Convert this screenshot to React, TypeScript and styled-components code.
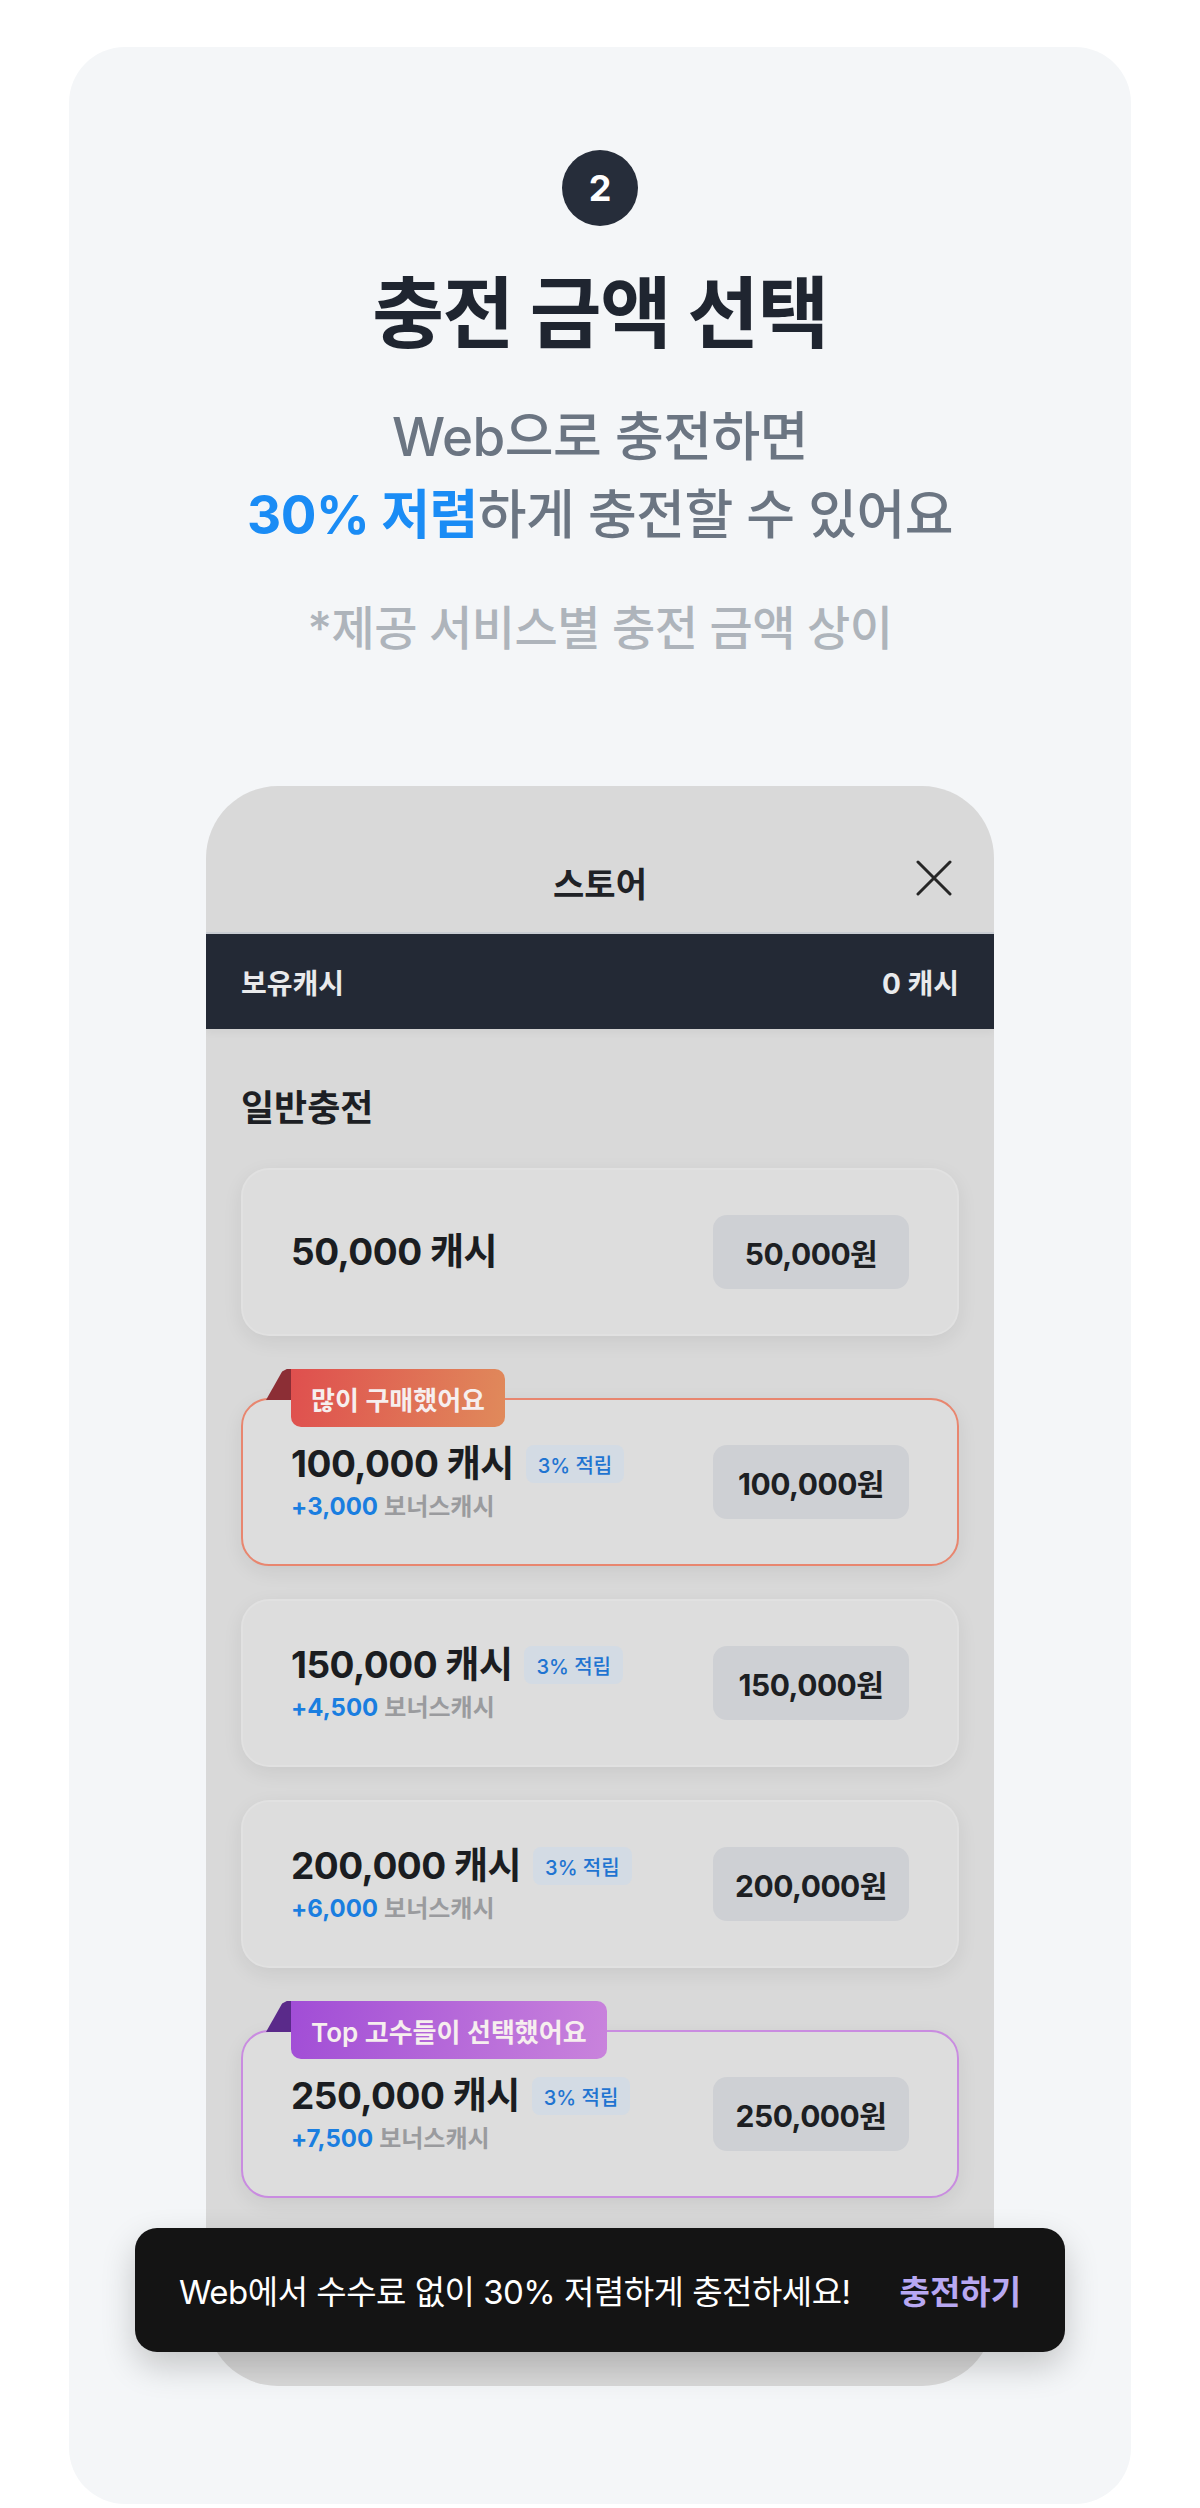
import styled, { createGlobalStyle } from 'styled-components';

type Plan = {
  cash: string,
  price: string,
  bonus?: string,
  badge?: { label: string, tone: 'coral' | 'violet' },
};

const PLANS: Plan[] = [
  { cash: '50,000', price: '50,000원' },
  { cash: '100,000', price: '100,000원', bonus: '+3,000', badge: { label: '많이 구매했어요', tone: 'coral' } },
  { cash: '150,000', price: '150,000원', bonus: '+4,500' },
  { cash: '200,000', price: '200,000원', bonus: '+6,000' },
  { cash: '250,000', price: '250,000원', bonus: '+7,500', badge: { label: 'Top 고수들이 선택했어요', tone: 'violet' } },
];

const TONES = {
  coral: { border: '#e8866f', from: '#df4f4e', to: '#e08a5b', fold: '#8c2e35' },
  violet: { border: '#c98ce0', from: '#a14dd6', to: '#c983dc', fold: '#5a2a8a' },
};

const CloseIcon = () => (
  <svg width="36" height="36" viewBox="0 0 36 36" fill="none">
    <path d="M2 2L34 34M34 2L2 34" stroke="#262626" strokeWidth="3" strokeLinecap="round" />
  </svg>
);

const App = () => (
  <>
    <GlobalStyle />
    <Section>
      <StepBadge>2</StepBadge>
      <Title>충전 금액 선택</Title>
      <Subtitle>
        Web으로 충전하면
        <br />
        <Accent>30% 저렴</Accent>하게 충전할 수 있어요
      </Subtitle>
      <Note>*제공 서비스별 충전 금액 상이</Note>

      <PhoneWrap>
        <Phone>
          <StoreHeader>
            <StoreTitle>스토어</StoreTitle>
            <CloseButton><CloseIcon /></CloseButton>
          </StoreHeader>
          <BalanceBar>
            <span>보유캐시</span>
            <span>0 캐시</span>
          </BalanceBar>
          <StoreBody>
            <GroupTitle>일반충전</GroupTitle>
            <PlanList>
              {PLANS.map(plan => {
                const tone = plan.badge ? TONES[plan.badge.tone] : undefined;
                return (
                  <PlanCard key={plan.cash} $border={tone?.border}>
                    {plan.badge && tone && (
                      <>
                        <RibbonFold $color={tone.fold} />
                        <Ribbon $from={tone.from} $to={tone.to}>{plan.badge.label}</Ribbon>
                      </>
                    )}
                    <PlanInfo>
                      <AmountRow>
                        <Amount>{plan.cash} 캐시</Amount>
                        {plan.bonus && <RateChip>3% 적립</RateChip>}
                      </AmountRow>
                      {plan.bonus && (
                        <Bonus>
                          <BonusValue>{plan.bonus}</BonusValue> 보너스캐시
                        </Bonus>
                      )}
                    </PlanInfo>
                    <PriceButton>{plan.price}</PriceButton>
                  </PlanCard>
                );
              })}
            </PlanList>
          </StoreBody>
        </Phone>
        <Toast>
          <ToastText>Web에서 수수료 없이 30% 저렴하게 충전하세요!</ToastText>
          <ToastAction>충전하기</ToastAction>
        </Toast>
      </PhoneWrap>
    </Section>
  </>
);

export default App;

const GlobalStyle = createGlobalStyle`
  body {
    margin: 0;
    background: #ffffff;
    font-family: Inter, "Noto Sans CJK KR", sans-serif;
  }
`;

const Section = styled.section`
  margin: 47px 69px 0;
  padding: 103px 0 118px;
  background: #f4f6f8;
  border-radius: 56px;
  display: flex;
  flex-direction: column;
  align-items: center;
`;

const StepBadge = styled.div`
  width: 76px;
  height: 76px;
  border-radius: 50%;
  background: #262d3a;
  color: #ffffff;
  font-size: 36px;
  font-weight: 700;
  display: flex;
  align-items: center;
  justify-content: center;
`;

const Title = styled.h1`
  margin: 40px 0 0;
  font-size: 78px;
  line-height: 96px;
  font-weight: 700;
  letter-spacing: -1.5px;
  color: #1f2530;
`;

const Subtitle = styled.p`
  margin: 36px 0 0;
  font-size: 53px;
  line-height: 78px;
  font-weight: 500;
  letter-spacing: -0.5px;
  color: #6b7582;
  text-align: center;
`;

const Accent = styled.span`
  color: #1a8cf5;
  font-weight: 700;
`;

const Note = styled.p`
  margin: 42px 0 0;
  font-size: 47px;
  line-height: 64px;
  font-weight: 500;
  letter-spacing: -0.5px;
  color: #aeb4bb;
`;

const PhoneWrap = styled.div`
  position: relative;
  width: 788px;
  margin-top: 126px;
`;

const Phone = styled.div`
  height: 1600px;
  border-radius: 72px;
  background: #d9d9d9;
  overflow: hidden;
  display: flex;
  flex-direction: column;
`;

const StoreHeader = styled.div`
  height: 100px;
  padding: 46px 42px 0;
  display: flex;
  align-items: center;
  justify-content: center;
  position: relative;
  border-bottom: 2px solid #c9cdd3;
`;

const StoreTitle = styled.div`
  font-size: 34px;
  font-weight: 700;
  color: #202226;
`;

const CloseButton = styled.div`
  position: absolute;
  right: 42px;
  top: 74px;
  display: flex;
`;

const BalanceBar = styled.div`
  height: 95px;
  padding: 0 35px;
  background: #232935;
  color: #e9eaec;
  font-size: 28px;
  font-weight: 700;
  display: flex;
  align-items: center;
  justify-content: space-between;
  box-shadow: 0 4px 8px rgba(0, 0, 0, 0.04);
`;

const StoreBody = styled.div`
  padding: 55px 35px 0;
`;

const GroupTitle = styled.h2`
  margin: 0;
  font-size: 36px;
  line-height: 48px;
  font-weight: 700;
  color: #1d1f24;
`;

const PlanList = styled.div`
  margin-top: 36px;
  display: flex;
  flex-direction: column;
  gap: 33px;
`;

const PlanCard = styled.div<{ $border?: string }>`
  position: relative;
  height: 168px;
  box-sizing: border-box;
  padding: 0 48px;
  border-radius: 28px;
  background: #dddddd;
  border: 2px solid ${({ $border }) => $border ?? 'rgba(255, 255, 255, 0.12)'};
  box-shadow: 0 6px 20px rgba(0, 0, 0, 0.07);
  display: flex;
  align-items: center;
  justify-content: space-between;
  margin-top: ${({ $border }) => ($border ? '29px' : '0')};
`;

const Ribbon = styled.div<{ $from: string, $to: string }>`
  position: absolute;
  left: 48px;
  top: -31px;
  height: 58px;
  padding: 0 20px;
  border-radius: 0 10px 10px 10px;
  background: linear-gradient(100deg, ${({ $from }) => $from}, ${({ $to }) => $to});
  color: #f6eeee;
  font-size: 26px;
  font-weight: 600;
  display: flex;
  align-items: center;
`;

const RibbonFold = styled.div<{ $color: string }>`
  position: absolute;
  left: 23px;
  top: -31px;
  width: 26px;
  height: 31px;
  background: ${({ $color }) => $color};
  clip-path: polygon(0 100%, 62% 8%, 80% 0, 100% 0, 100% 100%);
`;

const PlanInfo = styled.div`
  display: flex;
  flex-direction: column;
  gap: 2px;
`;

const AmountRow = styled.div`
  display: flex;
  align-items: center;
  gap: 12px;
`;

const Amount = styled.div`
  font-size: 37px;
  line-height: 48px;
  font-weight: 700;
  color: #1b1d21;
  letter-spacing: -0.5px;
`;

const RateChip = styled.div`
  height: 38px;
  padding: 0 12px;
  border-radius: 8px;
  background: #d3dbe4;
  color: #1f74d1;
  font-size: 20px;
  font-weight: 500;
  display: flex;
  align-items: center;
`;

const Bonus = styled.div`
  font-size: 24px;
  line-height: 34px;
  font-weight: 600;
  color: #9a9b9e;
`;

const BonusValue = styled.span`
  color: #1a7ee0;
  font-weight: 700;
`;

const PriceButton = styled.div`
  width: 196px;
  height: 74px;
  border-radius: 14px;
  background: #ced0d4;
  color: #1d1f23;
  font-size: 30px;
  font-weight: 700;
  letter-spacing: -0.5px;
  display: flex;
  align-items: center;
  justify-content: center;
`;

const Toast = styled.div`
  position: absolute;
  left: -71px;
  right: -71px;
  bottom: 34px;
  height: 124px;
  padding: 0 44px;
  border-radius: 22px;
  background: #141414;
  box-shadow: 0 14px 34px rgba(0, 0, 0, 0.2);
  display: flex;
  align-items: center;
  justify-content: space-between;
`;

const ToastText = styled.span`
  font-size: 33px;
  color: #ffffff;
  letter-spacing: -0.5px;
`;

const ToastAction = styled.span`
  font-size: 33px;
  font-weight: 700;
  color: #b8a8f2;
`;
